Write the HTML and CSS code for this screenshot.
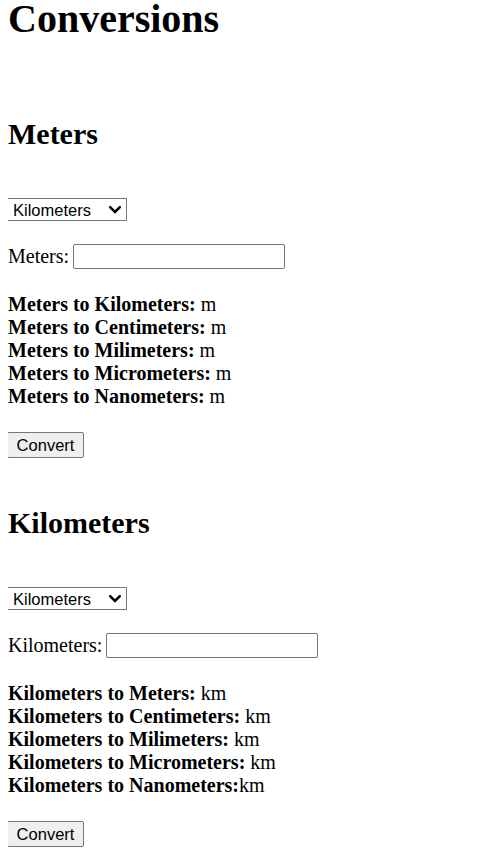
FILE: index.html
```html
<!DOCTYPE html>
<html>
<head>
<meta charset="utf-8">
<title>Conversions</title>
<link rel="stylesheet" href="styles.css">
</head>
<body>
<h1 class="title">Conversions</h1>

<section class="converter converter-first">
  <h2 class="unit-title">Meters</h2>
  <div class="row-select">
    <span class="select-wrap">
      <select class="unit-select">
        <option>Kilometers</option>
        <option>Centimeters</option>
      </select>
      <svg class="chevron" width="12" height="8" viewBox="0 0 12 8" aria-hidden="true"><path d="M1.3 1.3 L6 6 L10.7 1.3" fill="none" stroke="#000" stroke-width="2.6" stroke-linecap="square"/></svg>
    </span>
  </div>
  <div class="row-input">
    <label class="input-label">Meters:</label>
    <input class="value-input" type="text">
  </div>
  <div class="results">
    <div><b>Meters to Kilometers:</b> m</div>
    <div><b>Meters to Centimeters:</b> m</div>
    <div><b>Meters to Milimeters:</b> m</div>
    <div><b>Meters to Micrometers:</b> m</div>
    <div><b>Meters to Nanometers:</b> m</div>
  </div>
  <div class="row-button">
    <button class="convert-btn">Convert</button>
  </div>
</section>

<section class="converter">
  <h2 class="unit-title">Kilometers</h2>
  <div class="row-select">
    <span class="select-wrap">
      <select class="unit-select">
        <option>Kilometers</option>
        <option>Meters</option>
      </select>
      <svg class="chevron" width="12" height="8" viewBox="0 0 12 8" aria-hidden="true"><path d="M1.3 1.3 L6 6 L10.7 1.3" fill="none" stroke="#000" stroke-width="2.6" stroke-linecap="square"/></svg>
    </span>
  </div>
  <div class="row-input">
    <label class="input-label">Kilometers:</label>
    <input class="value-input" type="text">
  </div>
  <div class="results">
    <div><b>Kilometers to Meters:</b> km</div>
    <div><b>Kilometers to Centimeters:</b> km</div>
    <div><b>Kilometers to Milimeters:</b> km</div>
    <div><b>Kilometers to Micrometers:</b> km</div>
    <div><b>Kilometers to Nanometers:</b>km</div>
  </div>
  <div class="row-button">
    <button class="convert-btn">Convert</button>
  </div>
</section>
</body>
</html>
```

FILE: styles.css
```css
html, body {
  background: #ffffff;
}
body {
  margin: 0 8px;
  font-family: "Liberation Serif", "Times New Roman", serif;
  font-size: 20px;
  line-height: 23px;
  color: #000000;
}
.title {
  margin: 0;
  font-size: 40px;
  line-height: 37px;
  font-weight: bold;
}
.converter {
  margin-top: 48px;
}
.converter-first {
  margin-top: 80px;
}
.unit-title {
  margin: 0;
  font-size: 30px;
  line-height: 34px;
  font-weight: bold;
}
.row-select {
  margin-top: 47px;
  height: 23px;
}
.select-wrap {
  position: relative;
  display: block;
  width: 120px;
  height: 23px;
  margin-left: -1px;
}
.unit-select {
  -webkit-appearance: none;
  appearance: none;
  display: block;
  box-sizing: border-box;
  width: 120px;
  height: 23px;
  margin: 0;
  font-family: "Liberation Sans", Arial, sans-serif;
  font-size: 16.5px;
  color: #000;
  background: #fff;
  border: 1px solid #767676;
  border-radius: 0;
  padding: 0 0 0 5px;
  outline: none;
}
.chevron {
  position: absolute;
  right: 6px;
  top: 8px;
  pointer-events: none;
}
.row-input {
  margin-top: 23px;
  display: flex;
  align-items: center;
  gap: 4px;
  height: 25px;
}
.value-input {
  box-sizing: border-box;
  width: 212px;
  height: 25px;
  margin: 0;
  padding: 0 3px;
  border: 1px solid #767676;
  border-radius: 2px;
  font-family: "Liberation Sans", Arial, sans-serif;
  font-size: 16px;
  background: #fff;
}
.results {
  margin-top: 24px;
}
.row-button {
  margin-top: 24px;
  height: 26px;
}
.convert-btn {
  display: block;
  box-sizing: border-box;
  width: 77px;
  height: 26px;
  margin: 0 0 0 -1px;
  padding: 0;
  font-family: "Liberation Sans", Arial, sans-serif;
  font-size: 16.5px;
  color: #000;
  background: #efefef;
  border: 1px solid #767676;
  border-radius: 2px;
}
```
